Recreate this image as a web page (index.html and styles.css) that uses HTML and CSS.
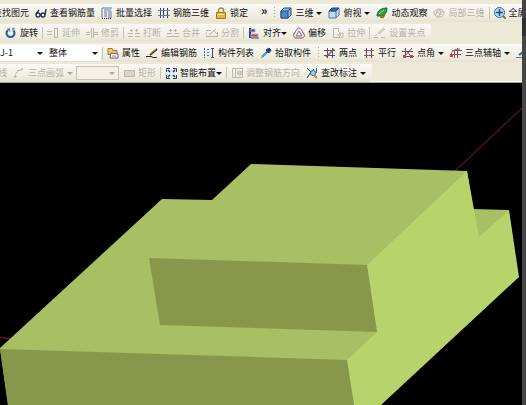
FILE: index.html
```html
<!DOCTYPE html>
<html lang="zh-CN">
<head>
<meta charset="utf-8">
<title>钢筋三维</title>
<link rel="stylesheet" href="styles.css">
</head>
<body>
<main class="app">
<header class="toolbars">
  <div class="row">
    <div class="bar bar-cut-view">
      <button class="tool"><svg class="icon" viewBox="0 0 12 12"><circle cx="5" cy="5" r="3"/><path d="M7 7l4 4"/></svg>查找图元</button>
      <button class="tool"><svg class="icon" viewBox="0 0 12 12"><g stroke="#26334d" stroke-width="1.4"><circle cx="3" cy="8" r="2"/><circle cx="8" cy="8" r="2"/><path d="M1 7L4 3M10 8l1-6M5 8h1"/></g></svg>查看钢筋量</button>
      <button class="tool"><svg class="icon" viewBox="0 0 12 12"><path stroke="#5d77a5" d="M1 11V1h10M3 3h7M3 5h3M3 7h3M3 9h3M8 4v7M10 4v7"/><path stroke="#222" stroke-dasharray="1 1" d="M1 11.500h10"/></svg>批量选择</button>
      <button class="tool"><svg class="icon" viewBox="0 0 12 12"><path stroke="#29496f" d="M2.500 1v10M5.500 1v10M9.500 1v10"/><path stroke="#6681a4" d="M0 3.500h12M0 8.500h12"/></svg>钢筋三维</button>
      <button class="tool"><svg class="icon" viewBox="0 0 12 12"><path stroke="#9b8953" stroke-width="1.500" d="M3.500 6V3.500a2.500 2.500 0 0 1 5 0V6"/><path fill="#e8b640" stroke="#a57920" d="M1.500 5.500h9v6h-9z"/><path stroke="#fff0a8" d="M3 7.500h6"/></svg>锁定</button>
      <button class="more" aria-label="更多">»</button>
    </div>
    <div class="bar bar-grow">
      <span class="grip"></span>
      <button class="tool"><svg class="icon" viewBox="0 0 12 12"><path fill="#8ebce9" stroke="#244f80" d="M1 4l3-3h7v7l-3 3H1z"/><path fill="#4e87c2" stroke="#244f80" d="M1 4h7v7H1zM8 4l3-3"/></svg>三维<i class="arrow"></i></button>
      <button class="tool"><svg class="icon" viewBox="0 0 12 12"><path fill="#c2daf1" stroke="#507aa4" d="M1 4h7v7H1zM8 4l3-3v7l-3 3"/><path fill="#35669d" stroke="#244f80" d="M1 4l3-3h7L8 4z"/></svg>俯视<i class="arrow"></i></button>
      <button class="tool"><svg class="icon" viewBox="0 0 12 12"><path fill="#2d9f3c" stroke="#176734" d="M1 9C1 3 6 1 11 1c0 5-2 8-8 8z"/><path stroke="#a6e88e" d="M3 7l5-4"/><path fill="#d8943d" stroke="#8b652a" d="M4 10l5-2-2 3z"/></svg>动态观察</button>
      <button class="tool" disabled><svg class="icon" viewBox="0 0 12 12"><ellipse cx="6" cy="6" rx="5" ry="4"/><path d="M2 9l3-6 3 1-3 7M6 8l4-4M3 4l6 4"/></svg>局部三维</button>
      <span class="sep"></span>
      <button class="tool"><svg class="icon" viewBox="0 0 12 12"><circle cx="5.500" cy="5.500" r="5" fill="#c0dbf4" stroke="#386797"/><path stroke="#164e91" stroke-width="1.500" d="M5.500 2v7M2 5.500h7"/><path stroke="#8b7254" stroke-width="2" d="M9 9l3 3"/></svg>全屏</button>
    </div>
  </div>

  <div class="row">
    <div class="bar bar-edit">
      <button class="tool"><svg class="icon" viewBox="0 0 12 12"><path stroke="#245aa0" stroke-width="2" d="M3 3C0 6 2 10 5.500 10S11 6 8 3"/><path fill="#245aa0" d="M5 1v4L2 2zM7 1h3L8 4z"/></svg>旋转</button>
      <span class="sep"></span>
      <button class="tool" disabled><svg class="icon" viewBox="0 0 12 12"><path d="M0 4.500h5M0 7.500h5M7.500 1v10M10.500 1v10M7 1.500h4M7 10.500h4"/></svg>延伸</button>
      <button class="tool" disabled><svg class="icon" viewBox="0 0 12 12"><path d="M0 5.500h4M8 5.500h4M0 7.500h4M8 7.500h4M5.500 1v10M7.500 1v10"/></svg>修剪</button>
      <span class="sep"></span>
      <button class="tool" disabled><svg class="icon" viewBox="0 0 12 12"><path d="M0 6.500h5M7 6.500h5M0 9.500h5M7 9.500h5M3.500 2v3M8.500 2v3M2 3.500h3M7 3.500h3"/></svg>打断</button>
      <button class="tool" disabled><svg class="icon" viewBox="0 0 12 12"><path d="M0 6.500h5M7 6.500h5M0 9.500h12M3.500 2v3M8.500 2v3M2 3.500h3M7 3.500h3"/></svg>合并</button>
      <button class="tool" disabled><svg class="icon" viewBox="0 0 12 12"><path d="M0 3.500h5M0 9.500h12M0 3v6M3 8l7-6M7 3l4 4M11.500 5v5"/></svg>分割</button>
      <span class="sep"></span>
      <button class="tool"><svg class="icon" viewBox="0 0 12 12"><path stroke="#243f79" stroke-width="2" d="M2 1v10"/><path fill="#294b86" d="M3 2h4v3H3z"/><path fill="#b84c54" d="M3 7h7v3H3z"/><path stroke="#294b86" d="M3 11h8"/></svg>对齐<i class="arrow arrow-near"></i></button>
      <button class="tool"><svg class="icon" viewBox="0 0 12 12"><path stroke="#a34662" d="M6 1C4 1 3 4 1 7c-1 2 0 4 2 4h6c2 0 3-2 2-4C9 4 8 1 6 1z"/><path stroke="#6b75a6" d="M6 4L3 9h6z"/></svg>偏移</button>
      <button class="tool" disabled><svg class="icon" viewBox="0 0 12 12"><path d="M1.500 11V1.500h5V5M1 10.500h10V6H7M5 8h4M7 6l2 2-2 2"/></svg>拉伸</button>
      <span class="sep"></span>
      <button class="tool" disabled><svg class="icon" viewBox="0 0 12 12"><path d="M1 9l2-2M4 6l6-5M5 7l6-5M0 10.500h4M7 10.500h4"/></svg>设置夹点</button>
    </div>
  </div>

  <div class="row">
    <div class="bar">
      <label class="combo combo-name"><select aria-label="构件名称"><option>J-1</option></select></label>
      <label class="combo combo-part"><select aria-label="构件范围"><option>整体</option></select></label>
      <span class="sep"></span>
      <button class="tool"><svg class="icon" viewBox="0 0 12 12"><path fill="#f3ca63" stroke="#9a7632" d="M1 1.500h4l1 2h4v4H1z"/><path fill="#fff" stroke="#5b6274" d="M4 6l7 1v4H3z"/><path stroke="#bc7130" d="M5 9h4"/></svg>属性</button>
      <button class="tool"><svg class="icon" viewBox="0 0 12 12"><path stroke="#423729" stroke-width="2" d="M4 8l7-6"/><path stroke="#bc964a" d="M4 7l6-5"/><path stroke="#222" d="M0 9.500h5l2 1h4"/></svg>编辑钢筋</button>
      <button class="tool"><svg class="icon" viewBox="0 0 12 12"><path stroke="#466fa6" stroke-dasharray="2 1" d="M1.500 1v10M4 2.500h3M4 5.500h3M4 8.500h3"/><path stroke="#315788" d="M9.500 1v10M8 1.500h3M8 10.500h3"/></svg>构件列表</button>
      <button class="tool"><svg class="icon" viewBox="0 0 12 12"><path stroke="#286bb0" stroke-width="2" d="M2 10l6-6"/><path fill="#173f79" stroke="#173f79" d="M6 3l3-2 2 2-2 3z"/><path stroke="#78b1df" d="M1 11l5-5"/></svg>拾取构件</button>
    </div>
    <div class="bar bar-grow">
      <span class="grip"></span>
      <button class="tool"><svg class="icon" viewBox="0 0 12 12"><path stroke="#45516e" d="M3.500 1v10M8.500 1v10M0 3.500h11M0 8.500h11"/><path stroke="#b64949" stroke-width="1.500" d="M2 10l8-8"/></svg>两点</button>
      <button class="tool"><svg class="icon" viewBox="0 0 12 12"><path stroke="#514765" d="M3.500 1v10M8.500 1v10"/><path stroke="#a24e5c" d="M1 3.500h10M1 8.500h10"/></svg>平行</button>
      <button class="tool"><svg class="icon" viewBox="0 0 12 12"><path stroke="#684a63" d="M3.500 1v10M0 4.500h11M1 9.500h11M2 10l8-9M5 4l5 7"/><path fill="#c34444" stroke="none" d="M1 8h3v3H1zM8 8h3v3H8z"/></svg>点角<i class="arrow"></i></button>
      <button class="tool"><svg class="icon" viewBox="0 0 12 12"><path stroke="#455f91" d="M7.500 1v10M2 3.500h10"/><path stroke="#bf4545" d="M1 9c0-5 4-7 9-7M4.500 4v7M1 7.500h10"/><path fill="#c34444" stroke="none" d="M0 7h3v3H0z"/></svg>三点辅轴<i class="arrow"></i></button>
      <button class="tool"><svg class="icon" viewBox="0 0 12 12"><path stroke="#375e99" stroke-width="2" d="M3 8l7-5"/><path stroke="#5d7b71" d="M0 10.500h11"/></svg>删除辅轴</button>
    </div>
  </div>

  <div class="row row-last">
    <div class="bar bar-cut-draw">
      <button class="tool" disabled><svg class="icon" viewBox="0 0 12 12"><path d="M1 11L11 1"/></svg>直线</button>
      <button class="tool" disabled><svg class="icon" viewBox="0 0 12 12"><path d="M2 11c0-5 3-8 8-9M1 9.500h3M4 3.500h3M9 1v3"/></svg>三点画弧<i class="arrow"></i></button>
      <label class="combo combo-empty"><select aria-label="画弧参数" disabled><option></option></select></label>
      <button class="tool" disabled><svg class="icon" viewBox="0 0 12 12"><path fill="#d8d6ca" d="M1.500 3.500h10v6h-10z"/></svg>矩形</button>
      <span class="sep"></span>
      <button class="tool"><svg class="icon" viewBox="0 0 12 12"><path fill="#e3ebf3" stroke="#293e59" d="M1.500 1.500h10v10h-10z"/><path stroke="#1e426e" stroke-width="1.500" d="M3 3l2 2M10 3L8 5M3 10l2-2M10 10L8 8"/><path fill="#e3ebf3" stroke="none" d="M5 0h3v3H5zM5 10h3v2H5zM0 5h3v3H0zM10 5h2v3h-2z"/></svg>智能布置<i class="arrow arrow-near"></i></button>
      <span class="sep"></span>
      <button class="tool" disabled><svg class="icon" viewBox="0 0 12 12"><path d="M1.500 1.500h10v9h-10zM4.500 2v8M7 4h3v4H7zM6 6h5"/></svg>调整钢筋方向</button>
      <button class="tool"><svg class="icon" viewBox="0 0 12 12"><path stroke="#333" d="M1 1l4 4-4 6M5 5l3-3"/><circle cx="7" cy="6" r="2.500" fill="#a6d3df" stroke="#286f96"/><path stroke="#c29332" stroke-width="2" d="M8 8l3 3"/><path stroke="#356299" d="M10.500 1v5"/></svg>查改标注<i class="arrow"></i></button>
    </div>
  </div>
</header>

<svg class="scene" viewBox="0 83 522 322" role="img" aria-label="三维模型">
  <path class="axis" d="M455 171L522 108M0 337.500L14 339.500"/>
  <path class="face-top" d="M0 348L162 199L212 200L251 164L467 171L509 210L480 260L354 405H8z"/>
  <path class="backdrop" d="M467 171L473 209L509 210V171z"/>
  <path class="face-side" d="M467 171L367 265L377 332L347 360L354 405H381L519 277L509 210L479 237z"/>
  <path class="face-front" d="M149 258L367 265L377 332L160 325zM0 349L347 360L354 405H8z"/>
</svg>
</main>
<div class="edge"></div>
</body>
</html>
```
FILE: styles.css
```css
* {
  box-sizing: border-box;
}

body {
  margin: 0;
  display: flex;
  min-height: 100vh;
  background: #000;
  color: #111;
  font: 9px/12px "Noto Sans CJK SC", sans-serif;
  overflow: hidden;
}

.app {
  flex: 1;
  min-width: 0;
}

.edge {
  flex: none;
  width: 4px;
  background: linear-gradient(#444 18px, #303030 18px 36px, #464646 36px);
}

.toolbars {
  padding-top: 3px;
  background: #ece9d8;
}

.row {
  display: flex;
  height: 20px;
  padding-top: 1px;
  overflow: hidden;
}

.row-last {
  border-bottom: 1px solid #aaa79c;
  box-shadow: inset 0 -1px #fff;
}

.bar {
  display: flex;
  flex: none;
  align-items: center;
  height: 18px;
  padding-right: 3px;
  border-radius: 0 2px 2px 0;
  background: linear-gradient(#faf9f5, #efede1 70%, #e6e2d0);
}

.bar-grow {
  flex: 1 0 auto;
}

.bar-edit {
  padding-left: 2px;
}

.bar-cut-view {
  margin-left: -25px;
}

.bar-cut-draw {
  margin-left: -29px;
}

.tool,
.more {
  display: flex;
  flex: none;
  align-items: center;
  gap: 3px;
  padding: 0 3px;
  border: 0;
  background: none;
  color: inherit;
  font: inherit;
  white-space: nowrap;
}

.more {
  align-self: flex-start;
  margin-left: 7px;
  font-size: 12px;
  font-weight: bold;
}

.tool:disabled {
  color: #b4b2a6;
}

.icon {
  flex: none;
  width: 12px;
  height: 12px;
  fill: none;
  stroke: #b9b7ab;
}

.arrow,
.combo::after {
  border: solid transparent;
  border-width: 3px 3px 0;
  border-top-color: #111;
}

.arrow-near {
  margin-left: -3px;
}

.tool:disabled .arrow {
  border-top-color: #aaa89c;
}

.sep {
  flex: none;
  width: 1px;
  height: 12px;
  margin: 0 1px;
  background: #c8c5b5;
}

.grip {
  flex: none;
  width: 1px;
  height: 12px;
  margin: 0 2px 0 1px;
  background: repeating-linear-gradient(#aaa797 0 1px, transparent 1px 3px);
}

.combo {
  display: flex;
  flex: none;
  align-items: center;
  height: 16px;
  padding-right: 3px;
  background: #fff;
}

.combo::after {
  content: "";
}

.combo select {
  flex: 1;
  min-width: 0;
  padding: 0;
  appearance: none;
  border: 0;
  background: none;
  color: inherit;
  font: inherit;
}

.combo-name {
  width: 46px;
}

.combo-part {
  width: 55px;
  padding-left: 3px;
}

.combo-empty {
  width: 43px;
  height: 14px;
  margin-right: 1px;
  border: 1px solid #c5c2b0;
  background: #f4f2e8;
}

.combo-empty::after {
  border-top-color: #aaa89c;
}

.scene {
  display: block;
  width: 100%;
  height: auto;
}

.axis {
  fill: none;
  stroke: #8e2020;
}

.backdrop {
  fill: #000;
}

.face-top {
  fill: #a8bf63;
}

.face-side {
  fill: #b8d36b;
}

.face-front {
  fill: #87984d;
}
```
